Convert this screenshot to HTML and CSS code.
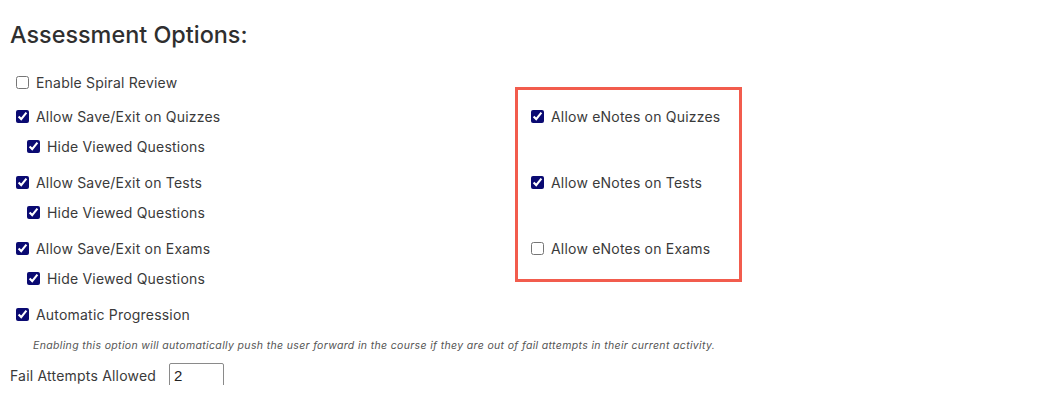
FILE: index.html
```html
<!DOCTYPE html>
<html lang="en">
<head>
<meta charset="utf-8">
<title>Assessment Options</title>
<link rel="stylesheet" href="styles.css">
</head>
<body>
<div class="page">
  <h2 class="title">Assessment Options:</h2>
  <div class="options">
    <div class="left-col">
      <label class="row spiral"><input type="checkbox"><span>Enable Spiral Review</span></label>
      <label class="row main"><input type="checkbox" checked><span>Allow Save/Exit on Quizzes</span></label>
      <label class="row sub"><input type="checkbox" checked><span>Hide Viewed Questions</span></label>
      <label class="row main"><input type="checkbox" checked><span>Allow Save/Exit on Tests</span></label>
      <label class="row sub"><input type="checkbox" checked><span>Hide Viewed Questions</span></label>
      <label class="row main"><input type="checkbox" checked><span>Allow Save/Exit on Exams</span></label>
      <label class="row sub"><input type="checkbox" checked><span>Hide Viewed Questions</span></label>
      <label class="row auto"><input type="checkbox" checked><span>Automatic Progression</span></label>
      <p class="note">Enabling this option will automatically push the user forward in the course if they are out of fail attempts in their current activity.</p>
      <div class="fail">
        <span>Fail Attempts Allowed</span>
        <input type="text" class="fail-input" value="2">
      </div>
    </div>
    <div class="right-col">
      <div class="highlight">
        <label class="row enote"><input type="checkbox" checked><span>Allow eNotes on Quizzes</span></label>
        <label class="row enote"><input type="checkbox" checked><span>Allow eNotes on Tests</span></label>
        <label class="row enote"><input type="checkbox"><span>Allow eNotes on Exams</span></label>
      </div>
    </div>
  </div>
</div>
</body>
</html>
```

FILE: styles.css
```css
html, body {
  margin: 0;
  padding: 0;
  background: #ffffff;
}

body {
  font-family: Inter, "Noto Sans", "Liberation Sans", sans-serif;
  color: #333333;
}

.page {
  padding: 20px 0 0 10px;
}

.title {
  margin: 0;
  font-size: 23.4px;
  font-weight: 500;
  line-height: 30px;
  color: #2f2f2f;
}

.options {
  display: flex;
  margin-top: 23px;
}

.left-col {
  display: flex;
  flex-direction: column;
  width: 505px;
}

.row {
  display: flex;
  align-items: center;
  height: 20px;
  font-size: 14px;
  line-height: 20px;
  letter-spacing: 0.2px;
  color: #3a3a3a;
  white-space: nowrap;
}

.row input {
  width: 13px;
  height: 13px;
  margin: 0 7px 0 0;
  accent-color: #0a0a72;
  position: relative;
  top: -1px;
}

.left-col .row {
  padding-left: 6px;
}

.spiral {
  margin-bottom: 14px;
}

.main {
  margin-bottom: 10px;
}

.left-col .sub {
  padding-left: 17px;
  margin-bottom: 16px;
}

.auto {
  margin-bottom: 11px;
}

.note {
  margin: 0 0 9px 0;
  padding-left: 23px;
  height: 20px;
  line-height: 20px;
  font-size: 10.5px;
  font-style: italic;
  color: #555555;
  letter-spacing: 0.35px;
  white-space: nowrap;
}

.fail {
  display: flex;
  align-items: center;
  height: 20px;
  font-size: 14px;
  letter-spacing: 0.2px;
  color: #3a3a3a;
  white-space: nowrap;
}

.fail-input {
  box-sizing: border-box;
  width: 55px;
  height: 24px;
  margin-left: 13px;
  padding: 0 4px;
  border: 1px solid #8a8a8a;
  border-radius: 2px;
  font-family: "Liberation Sans", Arial, sans-serif;
  font-size: 15px;
  color: #222222;
}

.right-col {
  display: flex;
  flex-direction: column;
  padding-top: 14px;
}

.highlight {
  box-sizing: border-box;
  width: 227px;
  height: 195px;
  border: 3px solid #f25c4d;
  padding: 17px 0 0 13px;
  display: flex;
  flex-direction: column;
  gap: 46px;
}
```
